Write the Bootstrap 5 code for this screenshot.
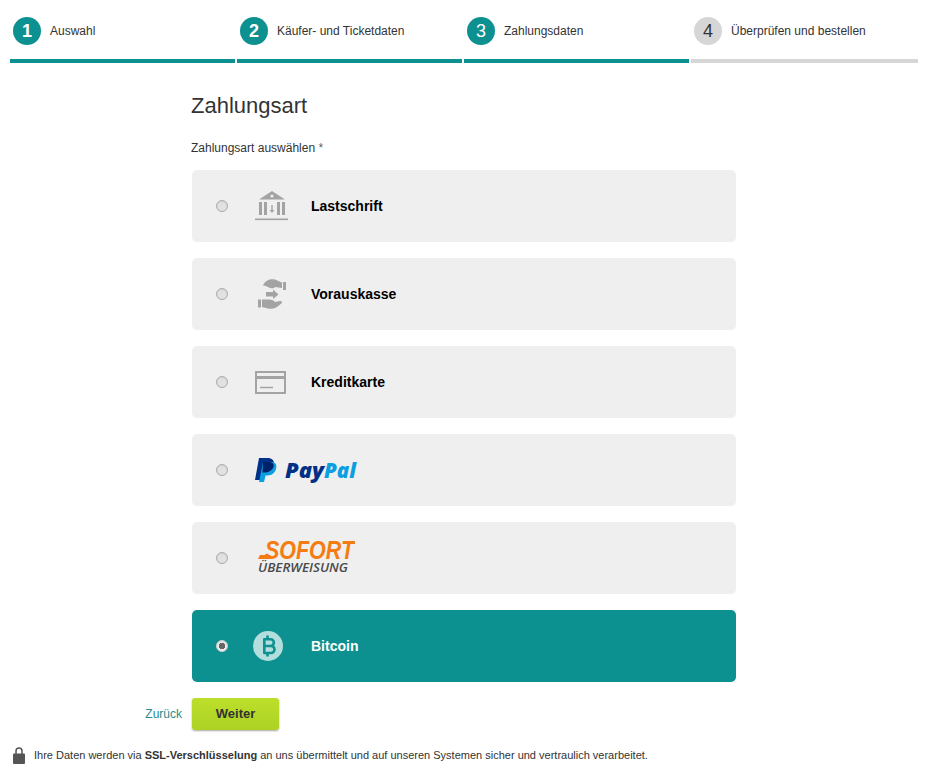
<!DOCTYPE html>
<html lang="de">
<head>
<meta charset="utf-8">
<title>Zahlungsart</title>
<link href="https://cdn.jsdelivr.net/npm/bootstrap@5.3.0/dist/css/bootstrap.min.css" rel="stylesheet">
<style>
body{font-family:"Liberation Sans",Arial,sans-serif;font-size:12px;color:#333;background:#fff;margin:0;overflow:hidden}
.page-wrap{height:784px;padding:0 10px}
.stepper{height:63px;gap:2px}
.step-item{flex:0 0 225px;height:63px;padding:17px 0 0 3px;border-bottom:4px solid #0d9190}
.step-item.step-off{flex:1 1 0;border-bottom-color:#d6d6d6}
.step-num{width:28px;height:28px;background:#0d9190;color:#fff;font-size:18px;line-height:28px;margin-right:9px}
.step-bold{font-weight:700}
.step-off .step-num{background:#d6d6d6;color:#333}
.step-name{font-size:12px;line-height:28px}
.pay-col{width:544px;margin-left:182px}
.pay-title{font-size:22px;font-weight:400;line-height:24px;margin:31px 0 0 -1px;color:#333}
.pay-label{font-size:12px;line-height:14px;margin:23px 0 15px -1px;display:block}
.pay-list{gap:16px}
.pay-opt{height:72px;background:#efefef;border-radius:5px;padding-left:24px;color:#000;font-size:14px;font-weight:700;margin:0;cursor:pointer}
.pay-opt.is-on{background:#0d9190;color:#fff}
.pay-radio.form-check-input{width:12px;height:12px;margin:0;flex:none;background-color:#e2e2e2;border:1px solid #aaa;box-shadow:inset 0 1px 2px rgba(0,0,0,.08)}
.pay-radio.form-check-input:checked{background-color:#eee;border-color:#ccc;background-image:radial-gradient(circle,#666 0,#666 3px,transparent 3.5px)}
.pay-icon{width:83px;height:72px;padding-left:27px;flex:none}
.pay-icon-btc{padding-left:25px}
.pay-icon svg{display:block;flex:none}
.logo-pp{font-family:"Open Sans","Liberation Sans",sans-serif;font-style:italic;font-weight:800;font-size:21px}
.logo-so{font-family:"Liberation Sans",sans-serif;font-style:italic;font-weight:700}
.logo-ub{font-family:"Open Sans","Liberation Sans",sans-serif;font-style:italic;font-weight:600}
.act-row{margin-top:16px}
.back-link{width:172px;margin-left:-182px;margin-right:10px;text-align:right;color:#2c8b8a;text-decoration:none;font-size:12px}
.next-btn.btn{width:87px;height:32px;padding:0;border:0;border-radius:3px;background:linear-gradient(#bcdf2b,#add224);color:#333;font-weight:700;font-size:13px;box-shadow:0 1px 2px rgba(0,0,0,.35)}
.secure-note{font-size:11px;margin:16px 0 0 3px;line-height:18px}
.secure-note svg{margin-right:9px;flex:none}
</style>
</head>
<body>
<div class="page-wrap">
  <div class="stepper d-flex">
    <div class="step-item d-flex align-items-start"><span class="step-num step-bold rounded-circle d-inline-block text-center">1</span><span class="step-name">Auswahl</span></div>
    <div class="step-item d-flex align-items-start"><span class="step-num step-bold rounded-circle d-inline-block text-center">2</span><span class="step-name">Käufer- und Ticketdaten</span></div>
    <div class="step-item d-flex align-items-start"><span class="step-num rounded-circle d-inline-block text-center">3</span><span class="step-name">Zahlungsdaten</span></div>
    <div class="step-item step-off d-flex align-items-start"><span class="step-num rounded-circle d-inline-block text-center">4</span><span class="step-name">Überprüfen und bestellen</span></div>
  </div>
  <div class="pay-col">
    <h1 class="pay-title">Zahlungsart</h1>
    <span class="pay-label">Zahlungsart auswählen <span class="text-body-secondary">*</span></span>
    <div class="pay-list d-flex flex-column">
      <label class="pay-opt d-flex align-items-center">
        <input class="form-check-input pay-radio" type="radio" name="pay">
        <span class="pay-icon d-flex align-items-center">
          <svg width="33" height="30" viewBox="0 0 33 30" fill="#a3a3a3"><path d="M17 0 L30 8.500 H4 Z"/><circle cx="17" cy="5" r="1.600" fill="#efefef"/><rect x="4" y="11" width="3" height="13"/><rect x="9" y="11" width="3" height="13"/><rect x="22" y="11" width="3" height="13"/><rect x="27" y="11" width="3" height="13"/><path d="M16.300 14h1.400v5h1.800l-2.500 3-2.500-3h1.800z"/><rect x="0" y="27.500" width="33" height="1.600"/></svg>
        </span>
        <span>Lastschrift</span>
      </label>
      <label class="pay-opt d-flex align-items-center">
        <input class="form-check-input pay-radio" type="radio" name="pay">
        <span class="pay-icon d-flex align-items-center">
          <svg width="33" height="30" viewBox="-3 0 33 30" fill="#a3a3a3"><path d="M5 6.500C7 1 13 -.5 17 .5L24 3.500V9L17 8C16 10 12 9.500 9 7.500C8 7 6 6.500 5 6.500Z"/><rect x="25" y="3" width="3" height="8"/><path d="M8 13h7V10.500l5.500 5-5.500 4.500V17.500H8z"/><rect x="0" y="20.500" width="3" height="8"/><path d="M4 20.500h7c3 0 5 1 6 2.500l5-1c2.500 0 2.500 2 0 3.500-3 3.500-8 5-12 4L4 28z"/></svg>
        </span>
        <span>Vorauskasse</span>
      </label>
      <label class="pay-opt d-flex align-items-center">
        <input class="form-check-input pay-radio" type="radio" name="pay">
        <span class="pay-icon d-flex align-items-center">
          <svg width="31" height="23" viewBox="0 0 31 23" fill="none" stroke="#a3a3a3" stroke-width="2"><rect x="1" y="1" width="29" height="21"/><path d="M1 6.500H30" stroke-width="3"/><path d="M5 16.500H18" stroke-width="1.500"/></svg>
        </span>
        <span>Kreditkarte</span>
      </label>
      <label class="pay-opt d-flex align-items-center">
        <input class="form-check-input pay-radio" type="radio" name="pay">
        <span class="pay-icon d-flex align-items-center">
          <svg width="102" height="26" viewBox="0 0 102 26"><path d="M4 1h8.500c4.500 0 7 2.200 6.300 6.500-.8 5-4.500 8-9 8H7.500L6 23H0Z" fill="#013088"/><path d="M8 5h8c4 0 6 2 5.200 6-.8 4.800-4.500 7.500-8.700 7.500H10.500L9 25H4Z" fill="#0c9fe0"/><path d="M8 5h6.500c4 0 4.500 3 4 5-1.500 3.500-5 5.500-9 5.500H7.500Z" fill="#012169"/><text x="30" y="21" class="logo-pp" fill="#013088" textLength="39" lengthAdjust="spacingAndGlyphs">Pay</text><text x="69" y="21" class="logo-pp" fill="#0c9fe0" textLength="32" lengthAdjust="spacingAndGlyphs">Pal</text></svg>
        </span>
        <span></span>
      </label>
      <label class="pay-opt d-flex align-items-center">
        <input class="form-check-input pay-radio" type="radio" name="pay">
        <span class="pay-icon d-flex align-items-center">
          <svg width="100" height="44" viewBox="0 -5 100 44"><path d="M3 18h11l2-4H5z" fill="#f47c13"/><text x="10" y="18" class="logo-so" font-size="25" fill="#f47c13" textLength="89" lengthAdjust="spacingAndGlyphs">SOFORT</text><text x="3" y="30.500" class="logo-ub" font-size="12" fill="#4a4a4a" textLength="90" lengthAdjust="spacingAndGlyphs">ÜBERWEISUNG</text></svg>
        </span>
        <span></span>
      </label>
      <label class="pay-opt is-on d-flex align-items-center">
        <input class="form-check-input pay-radio" type="radio" name="pay" checked>
        <span class="pay-icon pay-icon-btc d-flex align-items-center">
          <svg width="30" height="30" viewBox="0 0 30 30"><circle cx="15" cy="15" r="15" fill="#b4dedd"/><path d="M11.300 8.300H17.500a3.300 3.300 0 0 1 0 6.700H11.300ZM11.300 15H18a3.500 3.500 0 0 1 0 7H11.300Z" fill="none" stroke="#0d9190" stroke-width="2.600" stroke-linejoin="round"/><path d="M14.500 4.500v3.500M14.500 22v3.500" stroke="#0d9190" stroke-width="2.600"/></svg>
        </span>
        <span>Bitcoin</span>
      </label>
    </div>
    <div class="act-row d-flex align-items-center">
      <a class="back-link" href="#">Zurück</a>
      <button class="btn next-btn" type="button">Weiter</button>
    </div>
  </div>
  <div class="secure-note d-flex align-items-center">
    <svg width="12" height="17" viewBox="0 0 12 17"><path d="M3 7V4a3 3 0 0 1 6 0v3" fill="none" stroke="#555" stroke-width="1.500"/><rect x="0" y="6.500" width="12" height="10.500" rx="1" fill="#555"/></svg>
    <span>Ihre Daten werden via <b>SSL-Verschlüsselung</b> an uns übermittelt und auf unseren Systemen sicher und vertraulich verarbeitet.</span>
  </div>
</div>
</body>
</html>
